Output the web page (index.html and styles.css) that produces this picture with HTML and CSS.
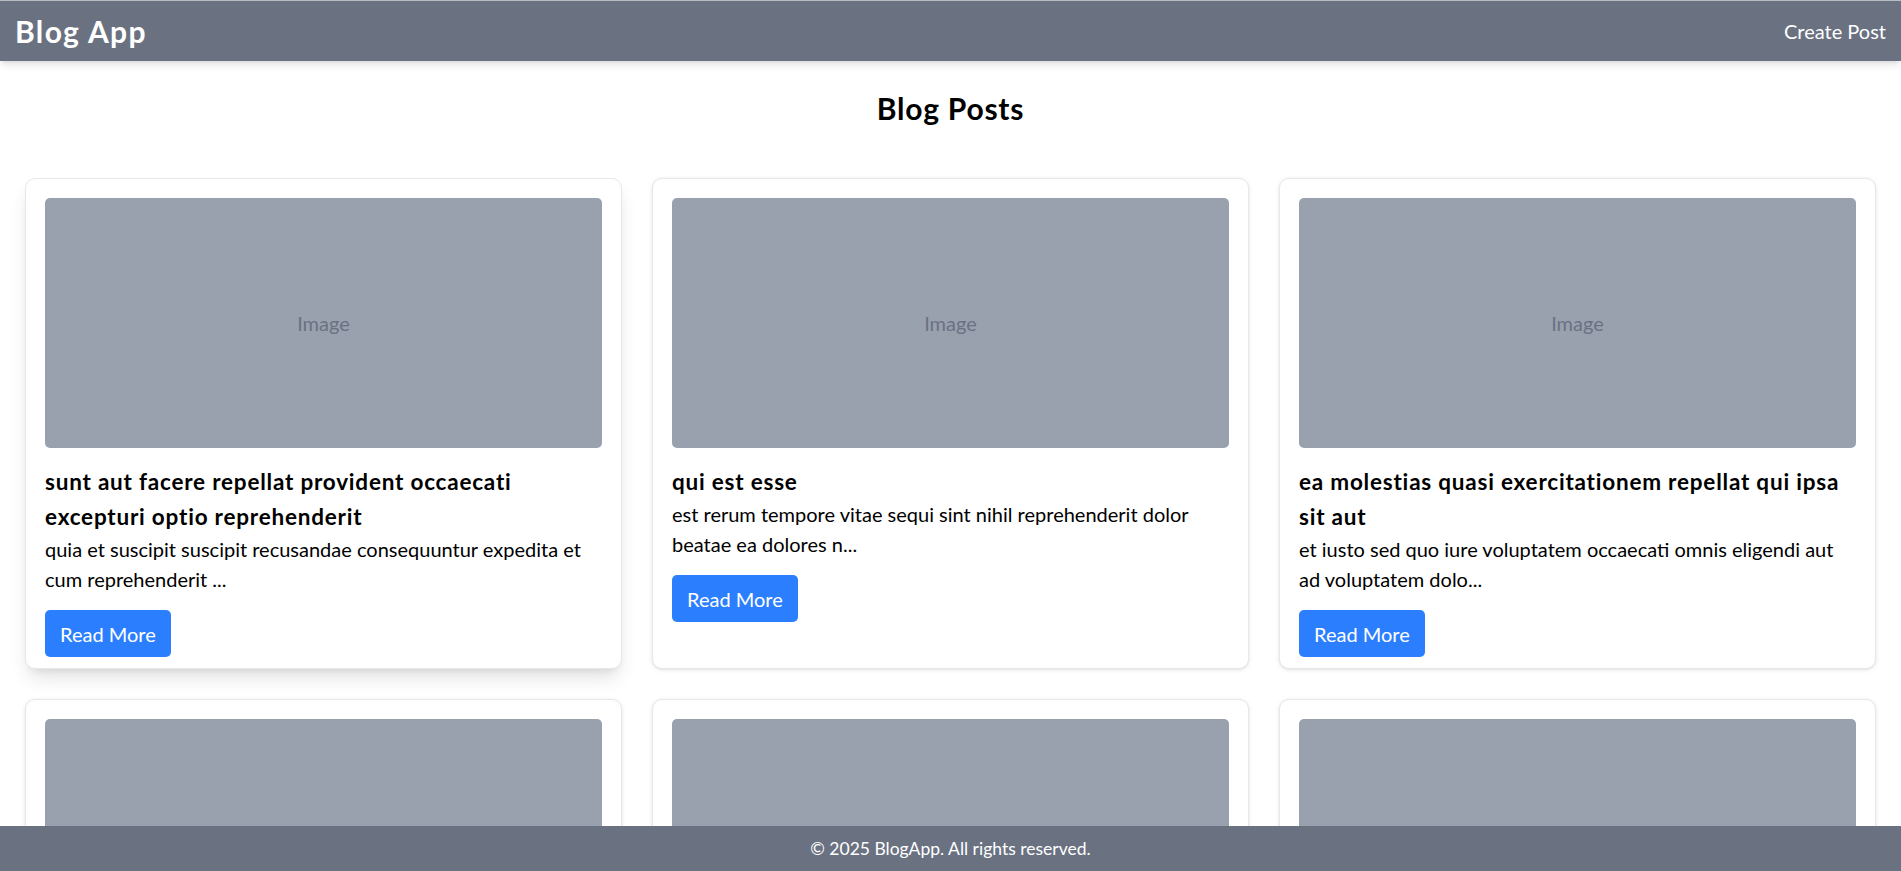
FILE: index.html
```html
<!DOCTYPE html>
<html lang="en">
<head>
<meta charset="utf-8">
<title>Blog App</title>
<link rel="stylesheet" href="styles.css">
</head>
<body>
<header class="navbar">
  <a class="brand" href="#">Blog App</a>
  <a class="nav-link" href="#">Create Post</a>
</header>
<main class="container">
  <h1 class="page-title">Blog Posts</h1>
  <div class="post-grid">
    <article class="post-card is-hover">
      <div class="post-image">Image</div>
      <h2 class="post-title">sunt aut facere repellat provident occaecati excepturi optio reprehenderit</h2>
      <p class="post-body">quia et suscipit suscipit recusandae consequuntur expedita et cum reprehenderit ...</p>
      <a class="btn" href="#">Read More</a>
    </article>
    <article class="post-card">
      <div class="post-image">Image</div>
      <h2 class="post-title">qui est esse</h2>
      <p class="post-body">est rerum tempore vitae sequi sint nihil reprehenderit dolor beatae ea dolores n...</p>
      <a class="btn" href="#">Read More</a>
    </article>
    <article class="post-card">
      <div class="post-image">Image</div>
      <h2 class="post-title">ea molestias quasi exercitationem repellat qui ipsa sit aut</h2>
      <p class="post-body">et iusto sed quo iure voluptatem occaecati omnis eligendi aut ad voluptatem dolo...</p>
      <a class="btn" href="#">Read More</a>
    </article>
    <article class="post-card">
      <div class="post-image">Image</div>
      <h2 class="post-title">eum et est occaecati</h2>
      <p class="post-body">ullam et saepe reiciendis voluptatem adipisci sit amet autem assumenda provident rer...</p>
      <a class="btn" href="#">Read More</a>
    </article>
    <article class="post-card">
      <div class="post-image">Image</div>
      <h2 class="post-title">nesciunt quas odio</h2>
      <p class="post-body">repudiandae veniam quaerat sunt sed alias aut fugiat sit autem sed est voluptatem om...</p>
      <a class="btn" href="#">Read More</a>
    </article>
    <article class="post-card">
      <div class="post-image">Image</div>
      <h2 class="post-title">dolorem eum magni eos aperiam quia</h2>
      <p class="post-body">ut aspernatur corporis harum nihil quis provident sequi mollitia nobis aliquid moles...</p>
      <a class="btn" href="#">Read More</a>
    </article>
  </div>
</main>
<footer class="footer">© 2025 BlogApp. All rights reserved.</footer>
</body>
</html>
```

FILE: styles.css
```css
* { box-sizing: border-box; }

html, body {
  margin: 0;
  padding: 0;
}

body {
  font-family: Lato, "Liberation Sans", sans-serif;
  font-size: 20px;
  line-height: 30px;
  color: #000;
  background: #fff;
  padding-bottom: 60px;
}

a { text-decoration: none; }

.navbar {
  position: relative;
  z-index: 2;
  display: flex;
  align-items: center;
  justify-content: space-between;
  height: 61px;
  padding: 0 15px;
  background: #6a7282;
  border-top: 1px solid #b9bcc3;
  box-shadow: 0 5px 8px -1px rgba(0,0,0,0.1), 0 2px 5px -2px rgba(0,0,0,0.1);
}

.brand {
  color: #fff;
  font-size: 30px;
  line-height: 40px;
  font-weight: 700;
  letter-spacing: 0.045em;
}

.nav-link {
  color: #fff;
  font-size: 20px;
  line-height: 30px;
}

.container {
  padding: 27px 25px 25px;
}

.page-title {
  margin: 0 0 50px;
  text-align: center;
  font-size: 30px;
  line-height: 40px;
  font-weight: 700;
  letter-spacing: 0.025em;
}

.post-grid {
  display: grid;
  grid-template-columns: repeat(3, 1fr);
  gap: 30px;
}

.post-card {
  background: #fff;
  border: 1px solid #e5e7eb;
  border-radius: 10px;
  padding: 19px 19px 11px;
  box-shadow: 0 1px 4px rgba(0,0,0,0.1), 0 1px 2px -1px rgba(0,0,0,0.1);
}

.post-card.is-hover {
  box-shadow: 0 12px 19px -4px rgba(0,0,0,0.12), 0 5px 8px -5px rgba(0,0,0,0.1);
}

.post-image {
  height: 250px;
  margin-bottom: 16px;
  border-radius: 5px;
  background: #99a1af;
  color: #6a7282;
  display: flex;
  align-items: center;
  justify-content: center;
  font-size: 20px;
}

.post-title {
  margin: 0;
  font-size: 22.5px;
  line-height: 35px;
  font-weight: 700;
  letter-spacing: 0.035em;
}

.post-body {
  margin: 0;
}

.btn {
  display: inline-block;
  margin-top: 16px;
  padding: 8.5px 15px;
  background: #2b7fff;
  color: #fff;
  border-radius: 5px;
  font-size: 20px;
  line-height: 30px;
}

.footer {
  position: fixed;
  left: 0;
  right: 0;
  bottom: 0;
  z-index: 3;
  height: 45px;
  padding: 10px;
  background: #6a7282;
  color: #fff;
  text-align: center;
  font-size: 17.5px;
  line-height: 25px;
}
```
